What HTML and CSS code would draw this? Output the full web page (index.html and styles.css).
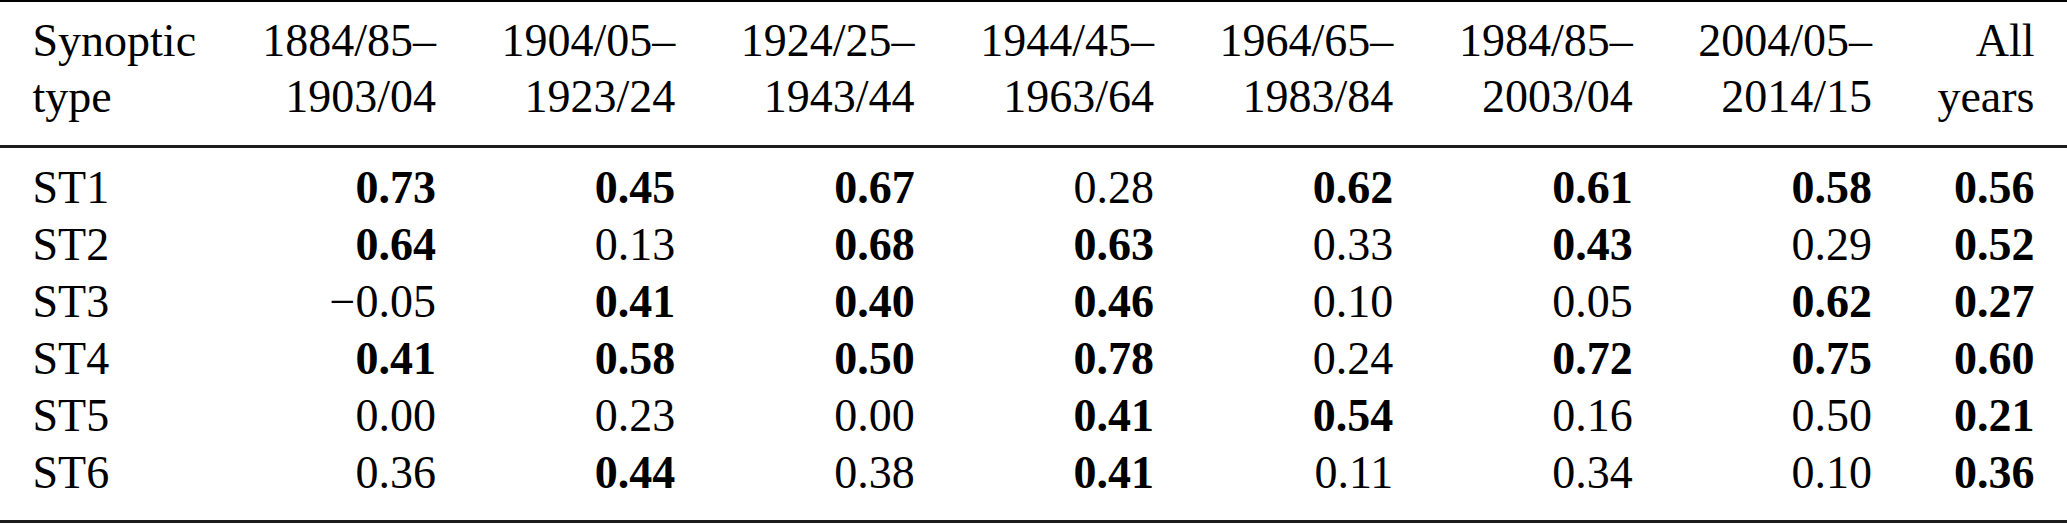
FILE: index.html
```html
<!DOCTYPE html>
<html lang="en">
  <head>
    <meta charset="UTF-8" />
    <meta name="viewport" content="width=device-width, initial-scale=1.0" />
    <title>Synoptic type correlations</title>
    <link rel="stylesheet" href="styles.css">
  </head>
  <body>
    <table class="results">
      <thead>
        <tr>
          <th class="label">Synoptic<br />type</th>
          <th>1884/85&ndash;<br />1903/04</th>
          <th>1904/05&ndash;<br />1923/24</th>
          <th>1924/25&ndash;<br />1943/44</th>
          <th>1944/45&ndash;<br />1963/64</th>
          <th>1964/65&ndash;<br />1983/84</th>
          <th>1984/85&ndash;<br />2003/04</th>
          <th>2004/05&ndash;<br />2014/15</th>
          <th>All<br />years</th>
        </tr>
      </thead>
      <tbody>
        <tr>
          <td class="label">ST1</td>
          <td class="sig">0.73</td>
          <td class="sig">0.45</td>
          <td class="sig">0.67</td>
          <td>0.28</td>
          <td class="sig">0.62</td>
          <td class="sig">0.61</td>
          <td class="sig">0.58</td>
          <td class="sig">0.56</td>
        </tr>
        <tr>
          <td class="label">ST2</td>
          <td class="sig">0.64</td>
          <td>0.13</td>
          <td class="sig">0.68</td>
          <td class="sig">0.63</td>
          <td>0.33</td>
          <td class="sig">0.43</td>
          <td>0.29</td>
          <td class="sig">0.52</td>
        </tr>
        <tr>
          <td class="label">ST3</td>
          <td>&minus;0.05</td>
          <td class="sig">0.41</td>
          <td class="sig">0.40</td>
          <td class="sig">0.46</td>
          <td>0.10</td>
          <td>0.05</td>
          <td class="sig">0.62</td>
          <td class="sig">0.27</td>
        </tr>
        <tr>
          <td class="label">ST4</td>
          <td class="sig">0.41</td>
          <td class="sig">0.58</td>
          <td class="sig">0.50</td>
          <td class="sig">0.78</td>
          <td>0.24</td>
          <td class="sig">0.72</td>
          <td class="sig">0.75</td>
          <td class="sig">0.60</td>
        </tr>
        <tr>
          <td class="label">ST5</td>
          <td>0.00</td>
          <td>0.23</td>
          <td>0.00</td>
          <td class="sig">0.41</td>
          <td class="sig">0.54</td>
          <td>0.16</td>
          <td>0.50</td>
          <td class="sig">0.21</td>
        </tr>
        <tr>
          <td class="label">ST6</td>
          <td>0.36</td>
          <td class="sig">0.44</td>
          <td>0.38</td>
          <td class="sig">0.41</td>
          <td>0.11</td>
          <td>0.34</td>
          <td>0.10</td>
          <td class="sig">0.36</td>
        </tr>
      </tbody>
    </table>
  </body>
</html>
```

FILE: styles.css
```css
body {
  margin: 0;
  background-color: #fff;
  color: #000;
  font-family: "Liberation Serif", "Times New Roman", serif;
  font-size: 46px;
}
.results {
  width: 100%;
  border-collapse: collapse;
  border-top: 2px solid #000;
  border-bottom: 3px solid #1c1c1c;
}
.results th,
.results td {
  padding: 0 32.5px;
  text-align: right;
  white-space: nowrap;
  vertical-align: top;
}
.results th {
  font-weight: normal;
  line-height: 56px;
  padding-top: 11px;
  padding-bottom: 20px;
  border-bottom: 3px solid #1c1c1c;
}
.results td {
  line-height: 57px;
}
.results tbody tr:first-child td {
  padding-top: 11px;
}
.results tbody tr:last-child td {
  padding-bottom: 19px;
}
.results .label {
  text-align: left;
}
.sig {
  font-weight: bold;
}
```
